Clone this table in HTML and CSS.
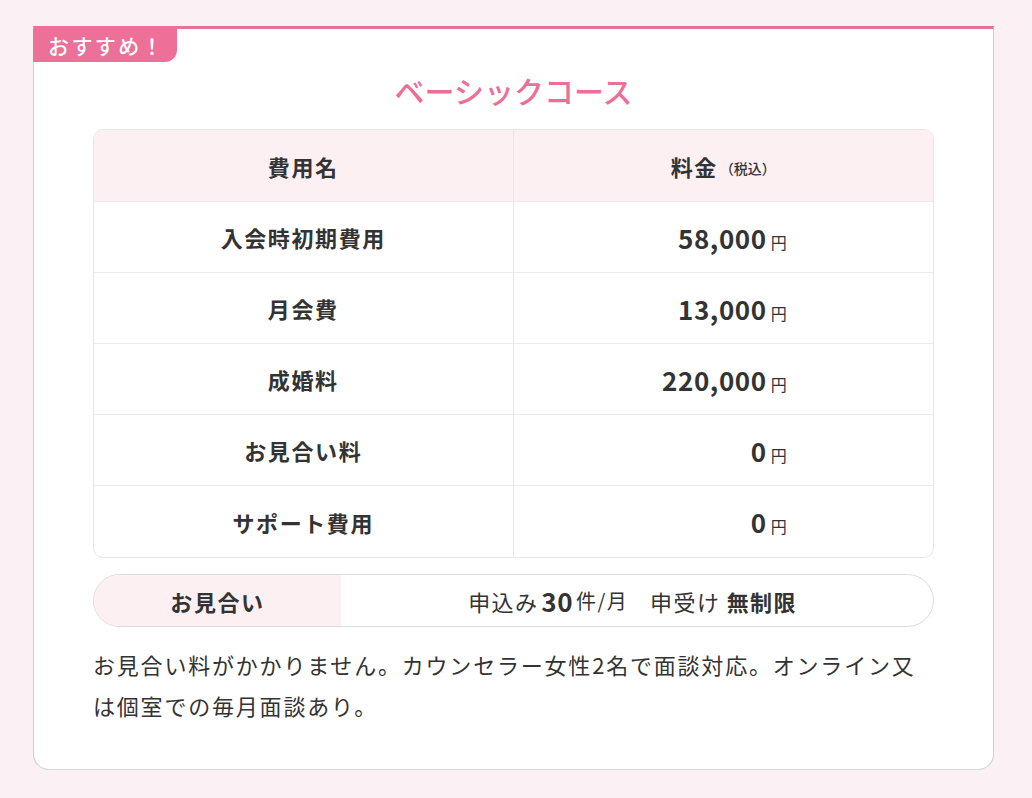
FILE: index.html
```html
<!DOCTYPE html>
<html lang="ja">
<head>
<meta charset="utf-8">
<title>ベーシックコース</title>
<link rel="stylesheet" href="styles.css">
</head>
<body>
<div class="page">
  <section class="card">
    <div class="badge">おすすめ！</div>
    <h2 class="title">ベーシックコース</h2>
    <table class="fees">
      <thead>
        <tr>
          <th>費用名</th>
          <th>料金<span class="tax">（税込）</span></th>
        </tr>
      </thead>
      <tbody>
        <tr><td class="name">入会時初期費用</td><td class="price"><span class="amt"><b>58,000</b><small>円</small></span></td></tr>
        <tr><td class="name">月会費</td><td class="price"><span class="amt"><b>13,000</b><small>円</small></span></td></tr>
        <tr><td class="name">成婚料</td><td class="price"><span class="amt"><b>220,000</b><small>円</small></span></td></tr>
        <tr><td class="name">お見合い料</td><td class="price"><span class="amt"><b>0</b><small>円</small></span></td></tr>
        <tr><td class="name">サポート費用</td><td class="price"><span class="amt"><b>0</b><small>円</small></span></td></tr>
      </tbody>
    </table>
    <div class="pill">
      <div class="pill-label">お見合い</div>
      <div class="pill-body">申込み<b class="num">30</b><span class="unit">件/月</span><span class="sep"></span>申受け <b>無制限</b></div>
    </div>
    <p class="desc">お見合い料がかかりません。カウンセラー女性2名で面談対応。オンライン又は個室での毎月面談あり。</p>
  </section>
</div>
</body>
</html>
```

FILE: styles.css
```css
html, body {
  margin: 0;
  padding: 0;
  background: #fbf0f3;
}
body {
  font-family: "Noto Sans CJK JP", "Noto Sans", sans-serif;
  color: #333;
}
.page {
  padding: 26px 38px 28px 33px;
}
.card {
  position: relative;
  background: #fff;
  border-top: 3px solid #ec7098;
  border-left: 1px solid #cfcfcf;
  border-right: 1px solid #cfcfcf;
  border-bottom: 1px solid #d6d6d6;
  border-radius: 0 0 16px 16px;
  padding: 40px 59px 43px 59px;
}
.badge {
  position: absolute;
  top: 0;
  left: -1px;
  height: 33px;
  width: 144px;
  box-sizing: border-box;
  padding-left: 15px;
  background: #ec7098;
  color: #fff;
  font-size: 21px;
  font-weight: 500;
  line-height: 32px;
  letter-spacing: 2.4px;
  border-radius: 0 0 12px 0;
}
.title {
  margin: 0 0 18px;
  text-align: center;
  color: #ec6f98;
  font-size: 30px;
  font-weight: 500;
  line-height: 42px;
  letter-spacing: 0;
}
.fees {
  width: 100%;
  border-collapse: separate;
  border-spacing: 0;
  border: 1px solid #e6e6e6;
  border-radius: 10px;
  overflow: hidden;
  table-layout: fixed;
}
.fees th, .fees td {
  height: 70px;
  padding: 0;
  text-align: center;
  font-size: 22px;
  letter-spacing: 1.6px;
  border-bottom: 1px solid #ececec;
}
.fees th:first-child, .fees td:first-child {
  border-right: 1px solid #e6e6e6;
}
.fees tbody tr:last-child td {
  border-bottom: none;
  height: 71px;
}
.fees th {
  background: #fcf0f3;
  font-weight: 700;
  height: 71px;
}
.fees .tax {
  font-size: 14px;
  font-weight: 500;
  letter-spacing: 0;
  margin-left: 2px;
  vertical-align: 2px;
}
.fees td.name {
  font-weight: 700;
}
.amt {
  display: inline-block;
  width: 127px;
  text-align: right;
}
.amt b {
  font-size: 26px;
  font-weight: 700;
  letter-spacing: 0.6px;
}
.amt small {
  font-size: 16px;
  font-weight: 400;
  margin-left: 4px;
  letter-spacing: 0;
}
.pill {
  display: flex;
  margin-top: 16px;
  height: 53px;
  border: 1px solid #dcdcdc;
  border-radius: 27px;
  overflow: hidden;
  box-sizing: border-box;
}
.pill-label {
  width: 247px;
  background: #fcf0f3;
  display: flex;
  align-items: center;
  justify-content: center;
  font-size: 22px;
  font-weight: 700;
  letter-spacing: 1.6px;
}
.pill-body {
  flex: 1;
  display: flex;
  align-items: center;
  justify-content: center;
  padding-right: 9px;
  font-size: 22px;
  letter-spacing: 1.4px;
  white-space: pre;
}
.pill-body b {
  font-weight: 700;
}
.pill-body .num {
  font-size: 26px;
  margin-left: 3px;
  letter-spacing: 0.5px;
}
.pill-body .unit {
  font-size: 20px;
  margin-left: 3px;
}
.pill-body .sep {
  display: inline-block;
  width: 22px;
}
.desc {
  margin: 17px 0 0;
  font-size: 22px;
  line-height: 41px;
  letter-spacing: 1.8px;
}
```
